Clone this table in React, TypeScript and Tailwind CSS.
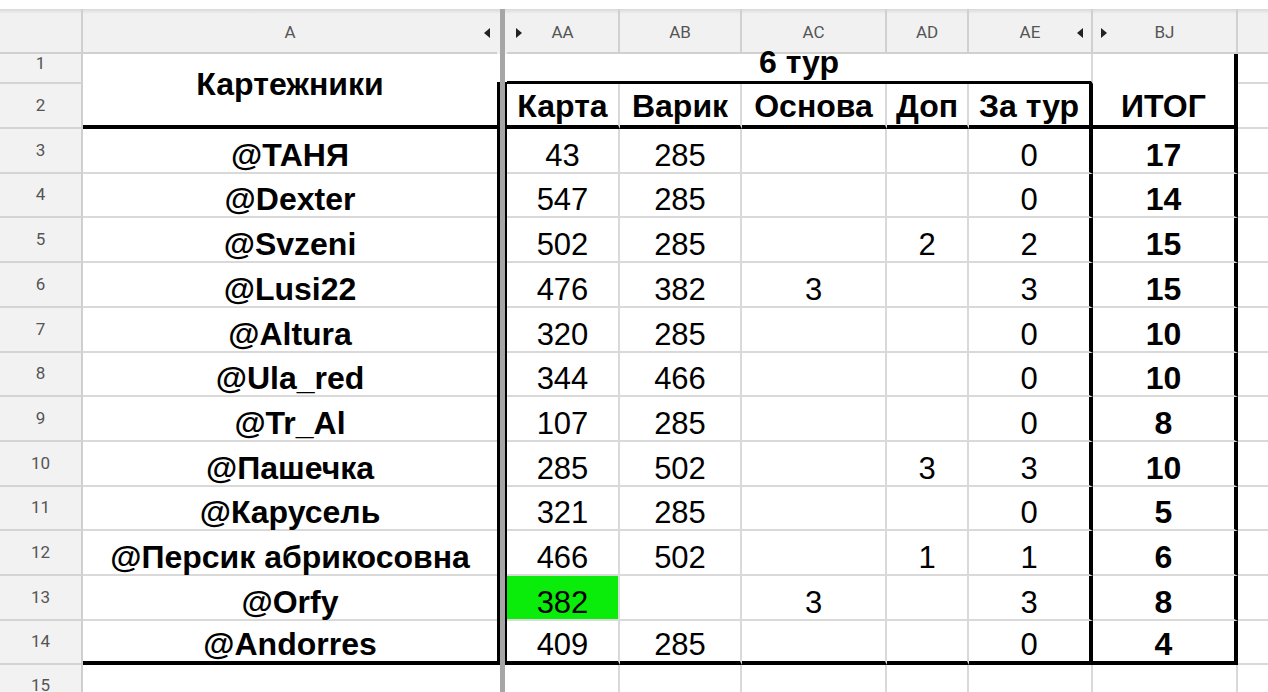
import React, { Fragment } from 'react';

type Row = { name: string; aa: string; ab: string; ac: string; ad: string; ae: string; bj: string; green?: boolean };

const rows: Row[] = [
  { name: '@ТАНЯ', aa: '43', ab: '285', ac: '', ad: '', ae: '0', bj: '17' },
  { name: '@Dexter', aa: '547', ab: '285', ac: '', ad: '', ae: '0', bj: '14' },
  { name: '@Svzeni', aa: '502', ab: '285', ac: '', ad: '2', ae: '2', bj: '15' },
  { name: '@Lusi22', aa: '476', ab: '382', ac: '3', ad: '', ae: '3', bj: '15' },
  { name: '@Altura', aa: '320', ab: '285', ac: '', ad: '', ae: '0', bj: '10' },
  { name: '@Ula_red', aa: '344', ab: '466', ac: '', ad: '', ae: '0', bj: '10' },
  { name: '@Tr_Al', aa: '107', ab: '285', ac: '', ad: '', ae: '0', bj: '8' },
  { name: '@Пашечка', aa: '285', ab: '502', ac: '', ad: '3', ae: '3', bj: '10' },
  { name: '@Карусель', aa: '321', ab: '285', ac: '', ad: '', ae: '0', bj: '5' },
  { name: '@Персик абрикосовна', aa: '466', ab: '502', ac: '', ad: '1', ae: '1', bj: '6' },
  { name: '@Orfy', aa: '382', ab: '', ac: '3', ad: '', ae: '3', bj: '8', green: true },
  { name: '@Andorres', aa: '409', ab: '285', ac: '', ad: '', ae: '0', bj: '4' },
];

const LeftTri = () => (
  <svg width="6" height="10" viewBox="0 0 6 10" className="shrink-0">
    <polygon points="6,0 6,10 0,5" fill="#222" />
  </svg>
);
const RightTri = () => (
  <svg width="6" height="10" viewBox="0 0 6 10" className="shrink-0">
    <polygon points="0,0 0,10 6,5" fill="#222" />
  </svg>
);

const HDR = "bg-[linear-gradient(to_bottom,#d9d9d9,#f1f1f1_5px)] border-b-2 border-b-[#d0d0d0] text-[17px] leading-none text-[#555] font-['Roboto',sans-serif]";
const RH = "flex items-center justify-center bg-[#f2f2f2] border-r-2 border-r-[#cfcfcf] border-b-2 border-b-[#d4d4d4] text-[17px] text-[#555] font-['Roboto',sans-serif]";
const CELL = 'flex items-end justify-center pb-[1px] leading-none';
const BOLD = 'font-bold text-[32px]';

export default function App() {
  return (
    <div className="h-[692px] w-[1268px] overflow-hidden bg-white font-['Liberation_Sans',Arial,sans-serif] text-black">
      <div className="h-[9px] bg-white" />
      <div className="grid grid-cols-[83px_414px_10px_113px_122px_145px_82px_124px_145px_30px] grid-rows-[45px_30px_45px_45px_44px_45px_45px_45px_44px_45px_45px_44px_45px_45px_44px_44px] text-[31px]">
        {/* freeze divider column */}
        <div className="col-start-3 row-span-full flex">
          <div className="flex w-[3px] flex-col">
            <div className="h-[45px] bg-[linear-gradient(to_bottom,#d9d9d9,#f1f1f1_5px)]" />
            <div className="h-[28px] bg-white" />
            <div className="h-[583px] bg-black" />
            <div className="flex-1 bg-white" />
          </div>
          <div className="w-[5px] bg-[#a6a6a6]" />
          <div className="flex w-[2px] flex-col">
            <div className="h-[45px] bg-[linear-gradient(to_bottom,#d9d9d9,#f1f1f1_5px)]" />
            <div className="h-[28px] bg-white" />
            <div className="h-[583px] bg-black" />
            <div className="flex-1 bg-white" />
          </div>
        </div>

        {/* column headers */}
        <div className={`${HDR} border-r-2 border-r-[#cfcfcf]`} />
        <div className={`${HDR} grid grid-cols-[1fr_auto_1fr] items-center pt-[4px]`}>
          <span />
          <span>A</span>
          <span className="flex justify-end pr-[7px]"><LeftTri /></span>
        </div>
        <div className={`${HDR} border-r-2 border-r-[#d0d0d0] grid grid-cols-[1fr_auto_1fr] items-center pt-[4px]`}>
          <span className="flex justify-start pl-[9px]"><RightTri /></span>
          <span>AA</span>
          <span />
        </div>
        <div className={`${HDR} border-r-2 border-r-[#d0d0d0] flex items-center justify-center pt-[4px]`}>AB</div>
        <div className={`${HDR} border-r-2 border-r-[#d0d0d0] flex items-center justify-center pt-[4px]`}>AC</div>
        <div className={`${HDR} border-r-2 border-r-[#d0d0d0] flex items-center justify-center pt-[4px]`}>AD</div>
        <div className={`${HDR} border-r-2 border-r-[#d0d0d0] grid grid-cols-[1fr_auto_1fr] items-center pt-[4px]`}>
          <span />
          <span>AE</span>
          <span className="flex justify-end pr-[8px]"><LeftTri /></span>
        </div>
        <div className={`${HDR} border-r-2 border-r-[#d0d0d0] grid grid-cols-[1fr_auto_1fr] items-center pt-[4px]`}>
          <span className="flex justify-start pl-[8px]"><RightTri /></span>
          <span>BJ</span>
          <span />
        </div>
        <div className={HDR} />

        {/* row 1 */}
        <div className={`${RH} pb-[8px]`}>1</div>
        <div className={`row-span-2 flex items-end justify-center pb-[25px] leading-none border-b-4 border-b-black ${BOLD}`}>Картежники</div>
        <div className={`col-span-5 flex items-end justify-center pb-[3px] leading-none border-r-2 border-r-[#d9d9d9] border-b-[3px] border-b-black ${BOLD}`}>6 тур</div>
        <div className={`row-span-2 flex items-end justify-center pb-[3px] leading-none border-r-4 border-r-black border-b-4 border-b-black ${BOLD}`}>ИТОГ</div>
        <div className="border-b-2 border-b-[#d9d9d9]" />

        {/* row 2 */}
        <div className={RH}>2</div>
        <div className={`flex items-end justify-center pb-[3px] leading-none border-r-2 border-r-[#d9d9d9] border-b-4 border-b-black ${BOLD}`}>Карта</div>
        <div className={`flex items-end justify-center pb-[3px] leading-none border-r-2 border-r-[#d9d9d9] border-b-4 border-b-black ${BOLD}`}>Варик</div>
        <div className={`flex items-end justify-center pb-[3px] leading-none border-r-2 border-r-[#d9d9d9] border-b-4 border-b-black ${BOLD}`}>Основа</div>
        <div className={`flex items-end justify-center pb-[3px] leading-none border-r-2 border-r-[#d9d9d9] border-b-4 border-b-black ${BOLD}`}>Доп</div>
        <div className={`flex items-end justify-center pb-[3px] leading-none border-r-4 border-r-black border-b-4 border-b-black ${BOLD}`}>За тур</div>
        <div className="border-b-2 border-b-[#d9d9d9]" />

        {/* data rows */}
        {rows.map((r, i) => {
          const last = i === rows.length - 1;
          const bb = last ? 'border-b-4 border-b-black' : 'border-b-2 border-b-[#d9d9d9]';
          return (
            <Fragment key={i}>
              <div className={RH}>{i + 3}</div>
              <div className={`${CELL} ${BOLD} ${bb}`}>{r.name}</div>
              <div className={`${CELL} ${bb} border-r-2 border-r-[#d9d9d9] ${r.green ? 'bg-[#0aec0a]' : ''}`}>{r.aa}</div>
              <div className={`${CELL} ${bb} border-r-2 border-r-[#d9d9d9]`}>{r.ab}</div>
              <div className={`${CELL} ${bb} border-r-2 border-r-[#d9d9d9]`}>{r.ac}</div>
              <div className={`${CELL} ${bb} border-r-2 border-r-[#d9d9d9]`}>{r.ad}</div>
              <div className={`${CELL} ${bb} border-r-4 border-r-black`}>{r.ae}</div>
              <div className={`${CELL} ${BOLD} ${bb} border-r-4 border-r-black`}>{r.bj}</div>
              <div className="border-b-2 border-b-[#d9d9d9]" />
            </Fragment>
          );
        })}

        {/* row 15 */}
        <div className={RH}>15</div>
        <div className="border-b-2 border-b-[#d9d9d9]" />
        <div className="border-r-2 border-r-[#d9d9d9] border-b-2 border-b-[#d9d9d9]" />
        <div className="border-r-2 border-r-[#d9d9d9] border-b-2 border-b-[#d9d9d9]" />
        <div className="border-r-2 border-r-[#d9d9d9] border-b-2 border-b-[#d9d9d9]" />
        <div className="border-r-2 border-r-[#d9d9d9] border-b-2 border-b-[#d9d9d9]" />
        <div className="border-r-2 border-r-[#d9d9d9] border-b-2 border-b-[#d9d9d9]" />
        <div className="border-r-2 border-r-[#d9d9d9] border-b-2 border-b-[#d9d9d9]" />
        <div className="border-b-2 border-b-[#d9d9d9]" />
      </div>
    </div>
  );
}
